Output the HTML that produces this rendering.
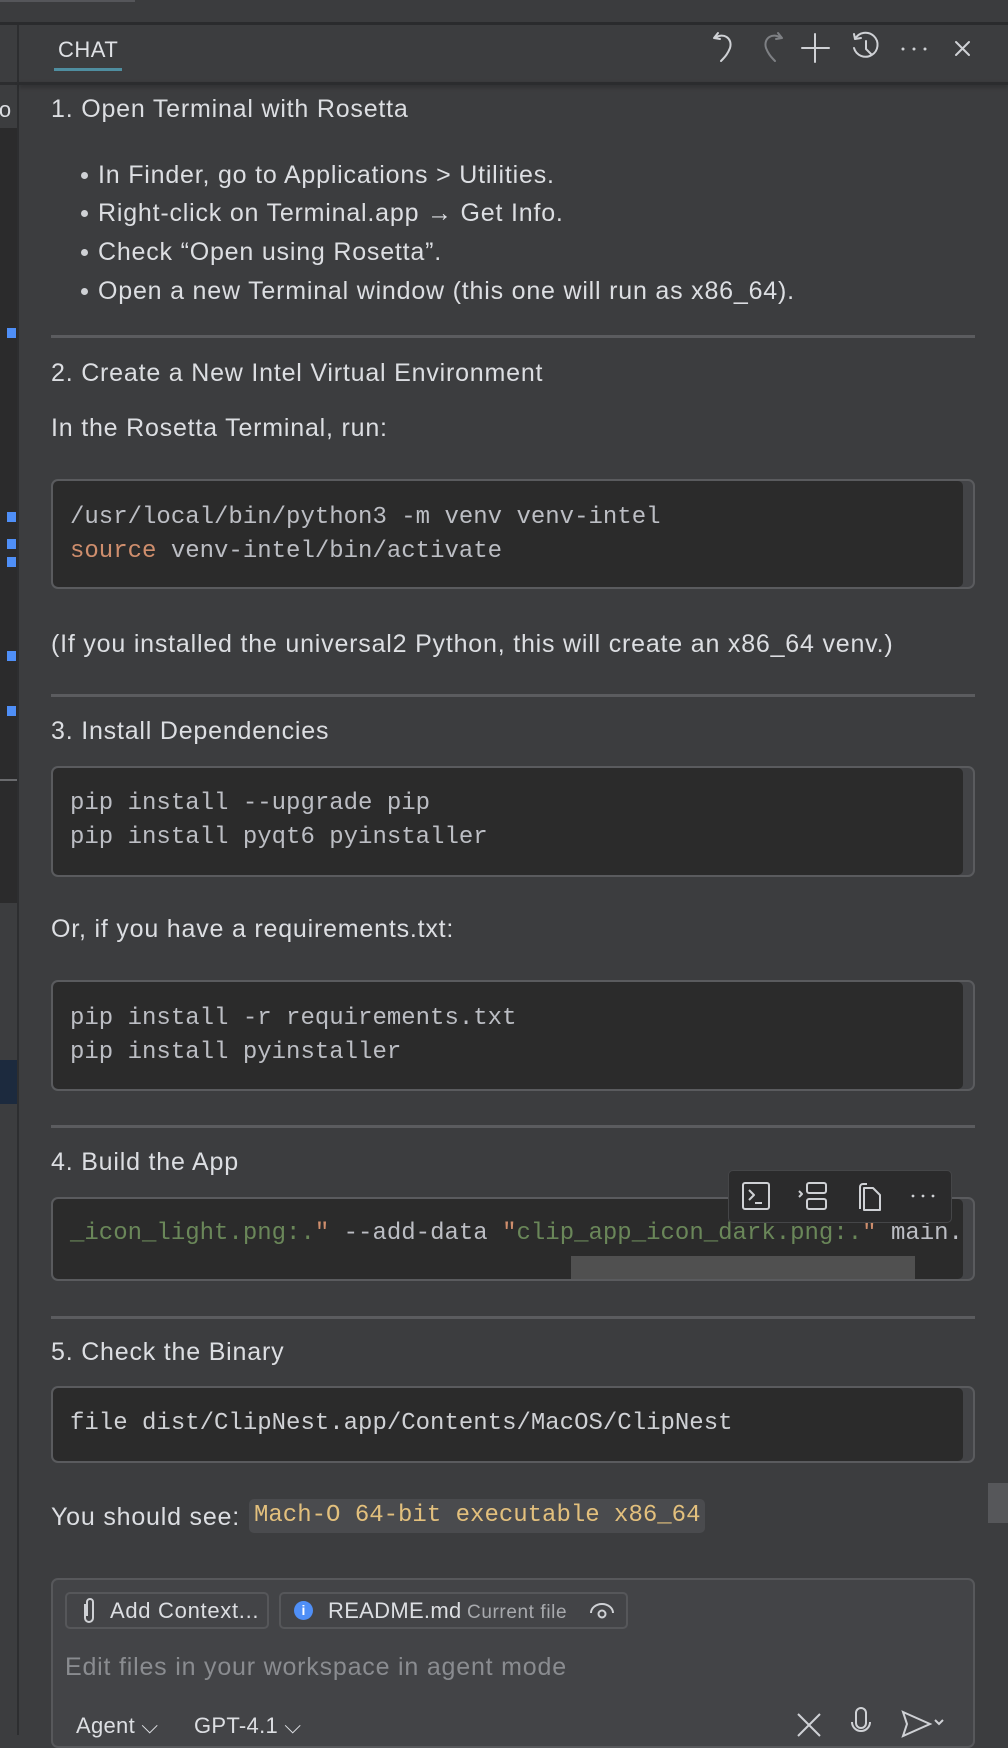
<!DOCTYPE html>
<html><head><meta charset="utf-8"><style>
*{margin:0;padding:0;box-sizing:border-box}
body{width:1008px;height:1735px;overflow:hidden;background:#3c3d3f;font-family:"Liberation Sans",sans-serif;color:#dfe1e5;position:relative}
.a{position:absolute}
.t{position:absolute;font-size:25px;letter-spacing:0.8px;line-height:30px;white-space:nowrap;color:#dcdee2}
.hr{position:absolute;left:51px;width:924px;height:3px;background:#5b5c5f}
.code{position:absolute;left:51px;width:924px;border:2px solid #5a5b5e;border-radius:7px;background:#434447;overflow:hidden}
.code .in{position:absolute;left:0;top:0;bottom:0;right:10px;background:#2b2b2b;border-radius:5px}
.m{position:absolute;left:17px;font-family:"Liberation Mono",monospace;font-size:24px;line-height:34px;white-space:pre;color:#bcbec4}
.or{color:#cf8e6d}.gr{color:#6a8759}
.li{position:absolute;left:81px;width:7px;height:7px;border-radius:50%;background:#cfd1d5}
svg{position:absolute;overflow:visible}
</style></head><body>
<div class="a" style="left:0;top:0;width:1008px;height:22px;background:#3b3c3e"></div>
<div class="a" style="left:0;top:0;width:135px;height:2px;background:#55565a"></div>
<div class="a" style="left:0;top:22px;width:1008px;height:3px;background:#2a2b2d"></div>
<div class="a" style="left:0;top:25px;width:17px;height:1710px;background:#3c3d3f"></div>
<div class="a" style="left:0;top:82px;width:17px;height:3px;background:#2c2d2f"></div>
<div class="t" style="left:-6px;top:95px;font-size:22px;letter-spacing:0">io</div>
<div class="a" style="left:0;top:128px;width:17px;height:775px;background:#2b2b2c"></div>
<div class="a" style="left:0;top:779px;width:17px;height:2px;background:#6a6b6e"></div>
<div class="a" style="left:0;top:1060px;width:17px;height:44px;background:#1c2a3e"></div>
<div class="a" style="left:7px;top:328px;width:9px;height:10px;background:#4f8ff7"></div>
<div class="a" style="left:7px;top:512px;width:9px;height:10px;background:#4f8ff7"></div>
<div class="a" style="left:7px;top:539px;width:9px;height:10px;background:#4f8ff7"></div>
<div class="a" style="left:7px;top:557px;width:9px;height:10px;background:#4f8ff7"></div>
<div class="a" style="left:7px;top:651px;width:9px;height:10px;background:#4f8ff7"></div>
<div class="a" style="left:7px;top:706px;width:9px;height:10px;background:#4f8ff7"></div>
<div class="a" style="left:17px;top:25px;width:2px;height:1710px;background:#2d2e30"></div>
<div class="t" style="left:58px;top:35px;font-size:22px;letter-spacing:0.5px;color:#dfe1e5">CHAT</div>
<div class="a" style="left:54px;top:68px;width:68px;height:3px;background:#4f8ea0"></div>
<div class="a" style="left:19px;top:82px;width:989px;height:3px;background:#2b2c2e;box-shadow:0 2px 4px rgba(0,0,0,.3)"></div>
<svg width="1008" height="90" style="left:0;top:0" fill="none" stroke-linecap="round" stroke-linejoin="round" stroke-width="2">
<path d="M714 38l4-5M714 38l6 1M715 38c8-6 18 0 15 10c-2 5-4 8-9 13" stroke="#cfd1d5"/>
<path d="M782 38l-4-5M782 38l-6 1M781 38c-8-6-18 0-15 10c2 5 4 8 9 13" stroke="#7e8084"/>
<path d="M815 34v28M802 48h27" stroke="#cfd1d5"/>
<path d="M855 39a12 12 0 1 1-1 9M855 39l-1-5M855 39l6-1M866 41v8l5 5" stroke="#cfd1d5"/>
<circle cx="903" cy="49" r="1.5" fill="#cfd1d5" stroke="none"/><circle cx="914" cy="49" r="1.5" fill="#cfd1d5" stroke="none"/><circle cx="925" cy="49" r="1.5" fill="#cfd1d5" stroke="none"/>
<path d="M956 42l13 13M969 42l-13 13" stroke="#cfd1d5"/>
</svg>
<div class="t" style="left:51px;top:94px">1. Open Terminal with Rosetta</div>
<div class="li" style="top:172px"></div><div class="t" style="left:98px;top:160px">In Finder, go to Applications &gt; Utilities.</div>
<div class="li" style="top:210px"></div><div class="t" style="left:98px;top:198px">Right-click on Terminal.app → Get Info.</div>
<div class="li" style="top:249px"></div><div class="t" style="left:98px;top:237px">Check “Open using Rosetta”.</div>
<div class="li" style="top:288px"></div><div class="t" style="left:98px;top:276px">Open a new Terminal window (this one will run as x86_64).</div>
<div class="hr" style="top:335px"></div>
<div class="t" style="left:51px;top:358px">2. Create a New Intel Virtual Environment</div>
<div class="t" style="left:51px;top:413px">In the Rosetta Terminal, run:</div>
<div class="code" style="top:479px;height:110px"><div class="in"></div>
<div class="m" style="top:20px">/usr/local/bin/python3 -m venv venv-intel
<span class="or">source</span> venv-intel/bin/activate</div></div>
<div class="t" style="left:51px;top:629px">(If you installed the universal2 Python, this will create an x86_64 venv.)</div>
<div class="hr" style="top:694px"></div>
<div class="t" style="left:51px;top:716px">3. Install Dependencies</div>
<div class="code" style="top:766px;height:111px"><div class="in"></div>
<div class="m" style="top:19px">pip install --upgrade pip
pip install pyqt6 pyinstaller</div></div>
<div class="t" style="left:51px;top:914px">Or, if you have a requirements.txt:</div>
<div class="code" style="top:980px;height:111px"><div class="in"></div>
<div class="m" style="top:20px">pip install -r requirements.txt
pip install pyinstaller</div></div>
<div class="hr" style="top:1125px"></div>
<div class="t" style="left:51px;top:1147px">4. Build the App</div>
<div class="code" style="top:1197px;height:84px"><div class="in"></div>
<div class="m" style="top:18px"><span class="gr">_icon_light.png:.</span><span class="or">"</span> --add-data <span class="or">"</span><span class="gr">clip_app_icon_dark.png:.</span><span class="or">"</span> main.</div>
<div class="a" style="left:518px;top:57px;width:344px;height:23px;background:#505050"></div></div>
<div class="a" style="left:728px;top:1170px;width:224px;height:53px;background:#2b2b2c;border:1px solid #454648;border-radius:5px"></div>
<svg width="1008" height="1735" style="left:0;top:0" fill="none" stroke="#cfd1d5" stroke-width="2" stroke-linejoin="round">
<rect x="743" y="1183" width="26" height="26" rx="2"/><path d="M749 1190l5 5-5 5M755 1203h7"/>
<path d="M799 1191l3 3-3 3"/><rect x="807" y="1183" width="19" height="10" rx="2"/><rect x="807" y="1199" width="19" height="10" rx="2"/>
<path d="M860 1209v-22a3 3 0 0 1 3-3h4"/><path d="M864 1210v-22h9l7 7v15z"/>
<circle cx="913" cy="1196" r="1.4" fill="#cfd1d5" stroke="none"/><circle cx="923" cy="1196" r="1.4" fill="#cfd1d5" stroke="none"/><circle cx="933" cy="1196" r="1.4" fill="#cfd1d5" stroke="none"/>
</svg>
<div class="hr" style="top:1316px"></div>
<div class="t" style="left:51px;top:1337px">5. Check the Binary</div>
<div class="code" style="top:1386px;height:77px"><div class="in"></div>
<div class="m" style="top:19px;color:#cfd1d5">file dist/ClipNest.app/Contents/MacOS/ClipNest</div></div>
<div class="t" style="left:51px;top:1502px">You should see:</div>
<div class="a" style="left:249px;top:1499px;width:456px;height:34px;background:#4a4b4e;border-radius:5px"></div>
<div class="m" style="left:254px;top:1499px;color:#e3c07d">Mach-O 64-bit executable x86_64</div>
<div class="a" style="left:988px;top:1483px;width:20px;height:40px;background:#56575a"></div>
<div class="a" style="left:51px;top:1578px;width:924px;height:170px;background:#434447;border:2px solid #57585b;border-radius:7px"></div>
<div class="a" style="left:65px;top:1592px;width:204px;height:37px;border:2px solid #56575a;border-radius:5px"></div>
<svg width="20" height="30" style="left:80px;top:1596px" fill="none" stroke="#cfd1d5" stroke-width="2"><path d="M5 8v14a4 4 0 0 0 8 0V6a3 3 0 0 0-6 0v14"/></svg>
<div class="t" style="left:110px;top:1596px;font-size:22px;letter-spacing:0.7px">Add Context...</div>
<div class="a" style="left:279px;top:1592px;width:349px;height:37px;border:2px solid #56575a;border-radius:5px"></div>
<div class="a" style="left:294px;top:1601px;width:19px;height:19px;border-radius:50%;background:#4f8ff7;color:#fff;font-size:14px;font-weight:bold;text-align:center;line-height:19px">i</div>
<div class="t" style="left:328px;top:1596px;font-size:22px;letter-spacing:0.3px">README.md</div>
<div class="t" style="left:467px;top:1598px;font-size:19px;letter-spacing:0.6px;color:#a8aaae">Current file</div>
<svg width="30" height="20" style="left:589px;top:1601px" fill="none" stroke="#cfd1d5" stroke-width="2"><path d="M2 12a11 9 0 0 1 22 0"/><circle cx="13" cy="13" r="3.5"/></svg>
<div class="t" style="left:65px;top:1652px;color:#8a8c90">Edit files in your workspace in agent mode</div>
<div class="t" style="left:76px;top:1711px;font-size:22px;letter-spacing:0.3px">Agent ⌵</div>
<div class="t" style="left:194px;top:1711px;font-size:22px;letter-spacing:0.3px">GPT-4.1 ⌵</div>
<svg width="1008" height="1735" style="left:0;top:0" fill="none" stroke="#cfd1d5" stroke-width="2">
<path d="M798 1714l22 22M820 1714l-22 22"/>
<rect x="856" y="1708" width="10" height="20" rx="5"/><path d="M852 1722a9 9 0 0 0 18 0"/>
<path d="M903 1712l27 12-27 12 4-12z"/><path d="M935 1720l4 4 4-4"/>
</svg>
</body></html>
